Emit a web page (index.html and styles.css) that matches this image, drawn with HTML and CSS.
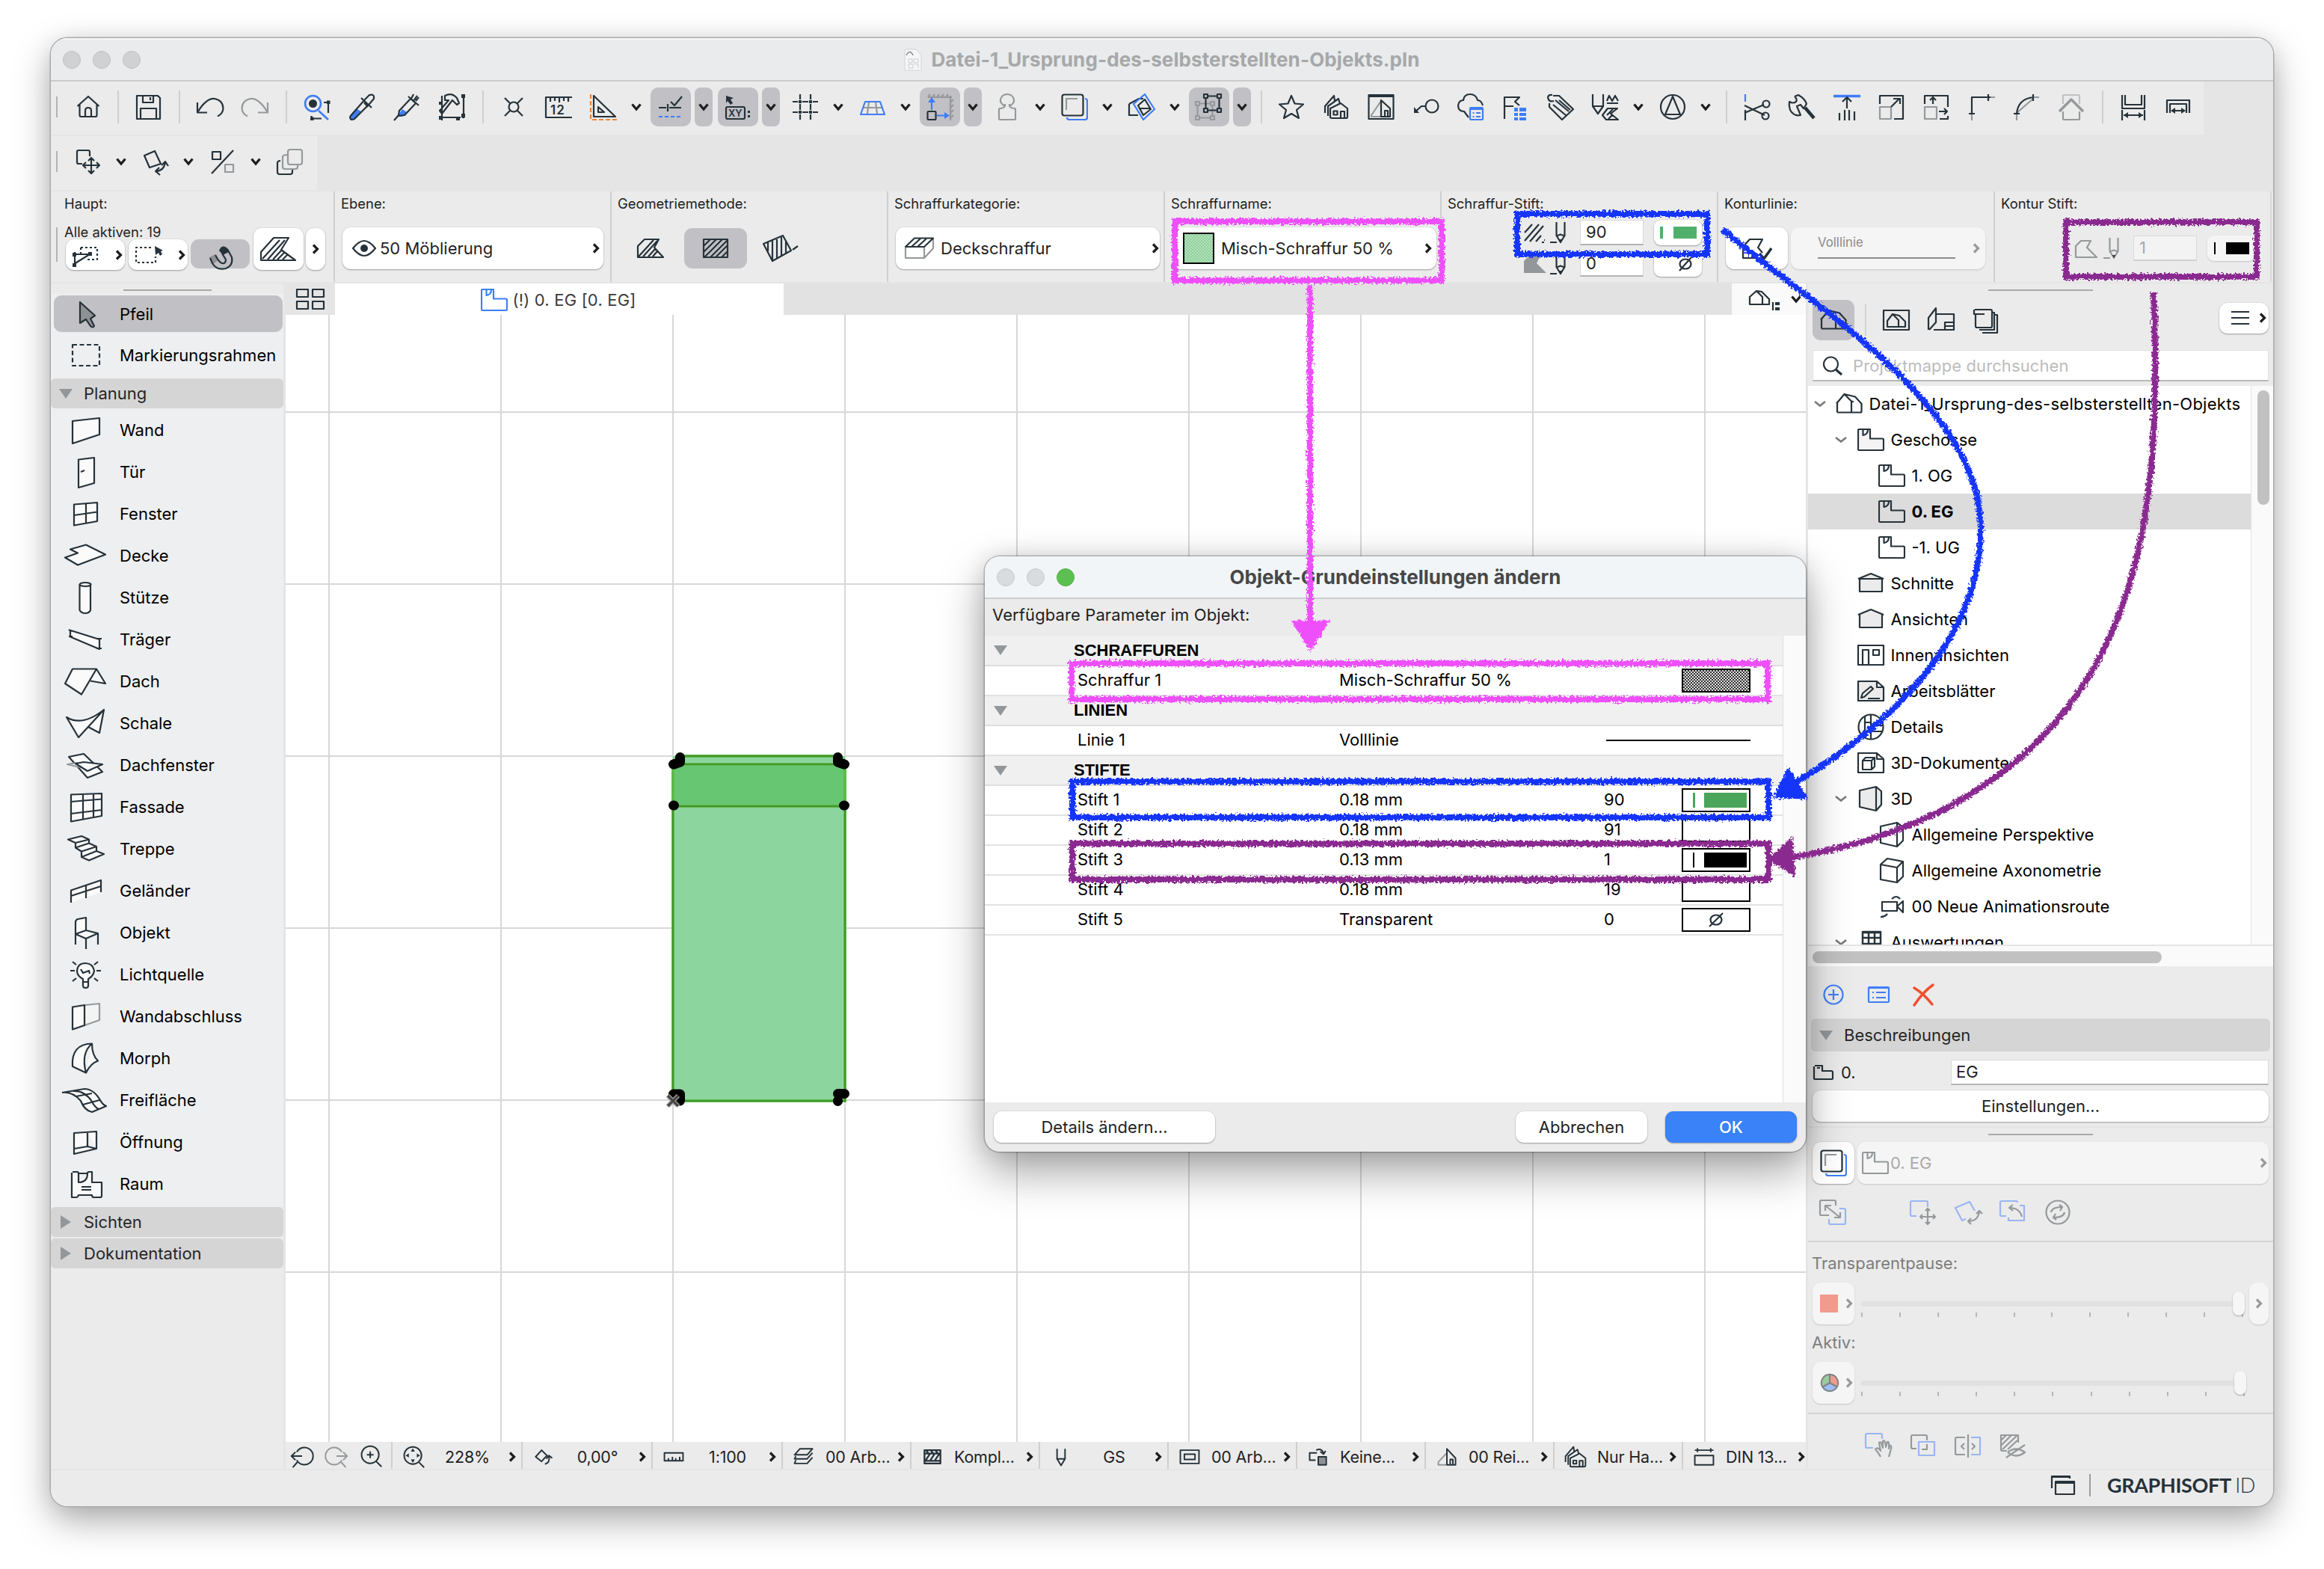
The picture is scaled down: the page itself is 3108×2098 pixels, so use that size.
FILE: index.html
```html
<!DOCTYPE html>
<html lang="de">
<head>
<meta charset="utf-8">
<title>Datei-1_Ursprung-des-selbsterstellten-Objekts.pln</title>
<link rel="stylesheet" href="styles.css">
</head>
<body>
<svg class="sprite" aria-hidden="true">
  <symbol id="cd" viewBox="0 0 16 16"><path d="M2.5 4.5l5.500 6.500 5.500-6.500"/></symbol>
  <symbol id="cr" viewBox="0 0 16 16"><path d="M5 2.500l5.500 5.500-5.500 5.500"/></symbol>
  <symbol id="tc" viewBox="0 0 20 20"><path d="M3 7l7 5.500 7-5.500"/></symbol>
  <symbol id="storey" viewBox="0 0 36 36"><path d="M3 4H17V16.500H33.500Q35 16.500 35 18V30.500Q35 32 33.500 32H2.500Q1 32 1 30.500V5Q1 4 3 4M7.500 4V12Q14 11 14 4"/></symbol>
  <symbol id="house" viewBox="0 0 36 36"><path d="M2 29.500V16.500L11.500 5 21 14.500V29.500H2M1 17.500L3 15M11.500 5L26 8.500 35.500 19M21 14.500L24 15.500M34.500 18V28Q34.500 29.500 33 29.500H21"/></symbol>
  <symbol id="pen" viewBox="0 0 24 30"><path d="M8.500 1V19L14 28 19.500 19V1M8.500 19.500L14 17.500 19.500 19.500M0 28H9"/><path class="f" d="M12 24h4l-2 4z"/></symbol>
  <symbol id="trace" viewBox="0 0 36 36"><path class="b" d="M32 7Q35 7 35 10V32Q35 35 32 35H11Q8 35 8 32"/><rect x="1.500" y="1.500" width="28" height="28" rx="3"/><path class="g" d="M7 22V7H22"/></symbol>
  <symbol id="reno" viewBox="0 0 36 36"><path d="M3 26V17L15 3 16 10 M7 30V17L21 7 23 14M10 33V20L24 13 33 20V31Q33 33 31 33H12Q10 33 10 31M24 33V24H29V33"/><rect x="14.500" y="23.500" width="5" height="5"/></symbol>
</svg>

<div class="window">
  <header class="titlebar">
    <div class="lights"><i></i><i></i><i></i></div>
    <div class="doctitle"><svg class="doc" viewBox="0 0 24 30"><path d="M1 1H16L23 9V29H1Z" fill="#f6f6f6" stroke="#d4d4d4"/><path d="M3 9Q8 0 12 9" fill="none" stroke="#888" stroke-width="1.500"/><path d="M6 14h5v5h-5zM13 14h6v5h-6zM6 21h6v5h-6zM14 21h5v5" fill="none" stroke="#ccc"/></svg>Datei-1_Ursprung-des-selbsterstellten-Objekts.pln</div>
  </header>

  <nav class="bar bar1">
    <div class="barfill">
      <i class="grip"></i>
      <span class="t"><svg class="i" viewBox="0 0 36 36"><path d="M3.500 17L18 4 32.500 17M6.500 15V29Q6.500 31 8.500 31H27.500Q29.500 31 29.500 29V15M14 31V23Q14 19 18 19T22 23V31"/></svg></span>
      <i class="sep s20"></i>
      <span class="t"><svg class="i" viewBox="0 0 36 36"><path d="M3 3H31L34 6V34H3Z M11 3V12H25V3M21 5V9M8 34V20H29V34"/></svg></span>
      <i class="sep"></i>
      <span class="t"><svg class="i" viewBox="0 0 36 36"><path d="M1 12V25.500H14M2 24Q13 6 24 7 35 9 35.500 20 35 27 28 30.500"/></svg></span>
      <span class="t"><svg class="i gray" viewBox="0 0 36 36"><path d="M35 12V25.500H22M34 24Q23 6 12 7 1 9 .500 20 1 27 8 30.500"/></svg></span>
      <i class="sep"></i>
      <span class="t"><svg class="i" viewBox="0 0 36 36"><path class="b" stroke-width="2.600" d="M20 23L33 35"/><ellipse class="b" stroke-width="2.600" cx="12.500" cy="13.500" rx="10.500" ry="10.500"/><circle class="f" cx="12.500" cy="13.500" r="5.500"/><path d="M33 12V26M27 12H35M12 33.500H24M10.500 30V36"/><path class="f" d="M31 9.500h4.500v4.500h-4.500zM9 31.500h4.500v4.500h-4.500z"/></svg></span>
      <span class="t"><svg class="i" viewBox="0 0 36 36"><path class="bf" d="M2 30L10 20 17 24 8 34Q3 37 2 30"/><path d="M2 31L22 8 28 2Q35 0 34 7L28 14 8 34Q2 37 2 31M17 6L31 19M21 12L26 18"/></svg></span>
      <span class="t"><svg class="i" viewBox="0 0 36 36"><path class="bf" d="M8 27L12 21 18 25 12 31H7"/><path d="M1 36L7 29 8 23 23 7 30 13 15 29 7 30M20 4L34 16M27 1L24 7M30 10L34 5M27 10L32 3"/></svg></span>
      <span class="t"><svg class="i" viewBox="0 0 36 36"><path d="M9 3Q18-2 25 6L28 13 25 15 19 9 5 27 2 23 14 9 9 9ZM5 3V33M34 3V33M3 32H30M33 28V33M5 28V36"/><path class="f" d="M1 30h5v5h-5zM31 27h5v5h-5zM1 11h4v4h-4zM31 1h5v5h-5zM24 31h5v5h-5z"/></svg></span>
      <i class="sep s23"></i>
      <span class="t"><svg class="i" viewBox="0 0 36 36"><circle cx="18" cy="18" r="6.500"/><path d="M6 6L13.500 13.500M30 6L22.500 13.500M6 30L13.500 22.500M30 30L22.500 22.500"/></svg></span>
      <span class="t"><svg class="i" viewBox="0 0 36 36"><path d="M36 5H1V32H36M7 5V11M13 5V10M19 5V12M25 5V10M31 5V11"/><text x="7" y="28" class="num">12</text></svg></span>
      <span class="t"><svg class="i" viewBox="0 0 36 36"><path class="o" stroke-dasharray="6 3" d="M1 1V35H36"/><path d="M5 3V31H34ZM11 18V25H19Z"/></svg></span><span class="c"><svg class="k"><use href="#cd"/></svg></span>
      <span class="t on"><svg class="i" viewBox="0 0 36 36"><path d="M2 19H12M16 19H32M14 14V24M18 11L23 16 33 4"/><path class="b" stroke-dasharray="5 3" d="M2 31H32"/></svg></span><span class="c on"><svg class="k"><use href="#cd"/></svg></span>
      <span class="t on"><svg class="i" viewBox="0 0 36 36"><path class="f" d="M2 3L12 6 8 8 11 13 8 15 4 10 2 13Z"/><rect x="2" y="18" width="25" height="16" rx="2"/><text x="5" y="31" class="xy">XY</text><path class="f" d="M31 23h3v3h-3zM31 29h3v3h-3z"/></svg></span><span class="c on"><svg class="k"><use href="#cd"/></svg></span>
      <span class="t"><svg class="i" viewBox="0 0 36 36"><path d="M11 1V8M11 14V22M11 28V35M25 1V8M25 14V22M25 28V35M1 11H8M14 11H22M28 11H35M1 25H8M14 25H22M28 25H35"/><path class="f" d="M9 9h4v4h-4zM23 9h4v4h-4zM9 23h4v4h-4zM23 23h4v4h-4z"/></svg></span><span class="c"><svg class="k"><use href="#cd"/></svg></span>
      <span class="t"><svg class="i" viewBox="0 0 36 36"><path class="g" d="M13 11L11 27M22 11L24 27M5 19H31"/><path class="b" d="M8 11H28L34 28H2Z"/></svg></span><span class="c"><svg class="k"><use href="#cd"/></svg></span>
      <span class="t on"><svg class="i" viewBox="0 0 36 36"><path class="g" d="M2 5H34M32 3V36M2 5l3-4M8 5l3-4M14 5l3-4M20 5l3-4M26 5l3-4M32 12l4-4M32 19l4-4M32 26l4-4M32 33l4-4"/><rect x="1.500" y="24" width="11" height="11" rx="1"/><path class="b" d="M7 22V10M14 29.500H25"/><path class="bf" d="M2 12L7 5 12 12ZM24 25L31 29.500 24 34Z"/></svg></span><span class="c on"><svg class="k"><use href="#cd"/></svg></span>
      <span class="t"><svg class="i gray" viewBox="0 0 36 36"><path d="M15 17Q8 13 9 8 11 1 18 1 25 1 27 8 28 13 21 17M15 14V17Q13 20 8 20 7 20 7 22V34Q7 35 8 35H28Q29 35 29 34V22Q29 20 28 20 23 20 21 17V14"/></svg></span><span class="c"><svg class="k"><use href="#cd"/></svg></span>
      <span class="t"><svg class="i"><use href="#trace"/></svg></span><span class="c"><svg class="k"><use href="#cd"/></svg></span>
      <span class="t"><svg class="i" viewBox="0 0 36 36"><path d="M1 14L14 7H20M1 14V29H13"/><path class="b" d="M22 1L35 21 20 35 7 14Z"/><path d="M22 8L30 21 20 29 13 16ZM14 20H29"/></svg></span><span class="c"><svg class="k"><use href="#cd"/></svg></span>
      <span class="t on"><svg class="i" viewBox="0 0 36 36"><path class="g" d="M0 11h5v5h-5zM0 30h5v5h-5zM20 30h5v5h-5zM20 11h5v5h-5zM2.500 16V30M5 32.500H20M5 13.500H20M22.500 16V30"/><path d="M11 1h5v5h-5zM29 1h5v5h-5zM11 20h5v5h-5zM29 20h5v5h-5zM16 3.500H29M16 22.500H29M13.500 6V20M31.500 6V20"/></svg></span><span class="c on"><svg class="k"><use href="#cd"/></svg></span>
      <i class="sep s20"></i>
      <span class="t"><svg class="i" viewBox="0 0 36 36"><path d="M18 3L22.500 13.500 34 14.500 25 22 28 33 18 27 8 33 11 22 2 14.500 13.500 13.500Z"/></svg></span>
      <span class="t"><svg class="i"><use href="#reno"/></svg></span>
      <span class="t"><svg class="i" viewBox="0 0 36 36"><path d="M1.500 2H34.500V34H1.500ZM1.500 4H34.500"/><path class="g" d="M5 31V29L18 10V31Z"/><path d="M18 9V31H30V20ZM23 31V23H27V31"/></svg></span>
      <span class="t"><svg class="i" viewBox="0 0 36 36"><circle cx="26" cy="17" r="8.500"/><path d="M18 17H12L4 24"/><path class="f" d="M2 26V18L9 26Z"/></svg></span>
      <span class="t"><svg class="i" viewBox="0 0 36 36"><path d="M15 32Q12 28 9 24 1 24 1 16 2 9 8 9 9 1 17 1 25 1 27 9 32 9 34 16"/><rect class="b" x="17" y="19" width="17" height="16" rx="1"/><path class="b" d="M17 21H34M20.500 26h2M25 26h6M20.500 31h2M25 31h6"/></svg></span>
      <span class="t"><svg class="i" viewBox="0 0 36 36"><path d="M3 34V5H23L17 11 23 16M3 17H15"/><path class="bf" d="M16 19h5v5h-5zM23 19h9v5h-9zM16 26h5v4h-5zM23 26h9v4h-9zM16 32h5v4h-5zM23 32h9v4h-9z"/></svg></span>
      <span class="t"><svg class="i" viewBox="0 0 36 36"><path d="M9 10Q2 12 1 5 2 1 7 2M8 3H16L35 21 20 35 3 18V13M11 9L29 24M8 15L25 29M16 9L31 22"/></svg></span>
      <span class="t"><svg class="i" viewBox="0 0 36 36"><path d="M1 1V17L8 27 15 17V1M1 17H15M20 10l3-7 4 7 4-7 4 7M20 13h15M19 35L14 29 21 20H34L25 27 35 35ZM20 29l8-8M22 34l6-6"/></svg></span><span class="c"><svg class="k"><use href="#cd"/></svg></span>
      <span class="t"><svg class="i" viewBox="0 0 36 36"><circle cx="18" cy="18" r="16"/><path d="M18 4L28 28H8Z"/></svg></span><span class="c"><svg class="k"><use href="#cd"/></svg></span>
      <i class="sep s23"></i>
      <span class="t"><svg class="i" viewBox="0 0 36 36"><path class="b" d="M2 1V11"/><path d="M2 22V36M1 16L28 29M1 26L27 15"/><circle cx="30" cy="14" r="4.500"/><circle cx="29" cy="30" r="4.500"/></svg></span>
      <span class="t"><svg class="i" viewBox="0 0 36 36"><path d="M8 4L13 2Q22 7 24 14L20 20 16 15 11 17 16 29Q7 31 2 22 0 16 1 11 6 14 10 11 12 8 8 4"/><path stroke-width="4.500" d="M22 19L34 33"/></svg></span>
      <span class="t"><svg class="i" viewBox="0 0 36 36"><path class="b" stroke-width="3.500" d="M0 3.500H36"/><path d="M18 20V6M12 11L18 5 24 11M8 36V26M15 36V22M21 36V22M28 36V24"/></svg></span>
      <span class="t"><svg class="i" viewBox="0 0 36 36"><path class="g" d="M2 18H17V34H2Z"/><path d="M2 14V3H33V34H21M17 18L28 7M20 7H29V14"/></svg></span>
      <span class="t"><svg class="i" viewBox="0 0 36 36"><path class="g" d="M2 18H18V34H2Z"/><path d="M2 14V3H33V18M33 30V34H22M13 14V6M9 9l4-4 4 4M21 24H31M28 20l4 4-4 4"/></svg></span>
      <span class="t"><svg class="i" viewBox="0 0 36 36"><path class="g" d="M5 28V36M30 5H36"/><path d="M5 28V5H30M1 27H9M27 1V10"/></svg></span>
      <span class="t"><svg class="i" viewBox="0 0 36 36"><path class="g" d="M5 28V36M5 26L27 7M28 5H35"/><path d="M5 28Q6 7 28 5M1 27H9M27 1V10"/></svg></span>
      <span class="t"><svg class="i gray" viewBox="0 0 36 36"><path d="M7 24V34Q7 35 9 35H27Q29 35 29 34V24"/><path opacity=".5" d="M7 14V3Q7 2 9 2H27Q29 2 29 3V14"/><path stroke-width="3.500" d="M2 24L18 8 34 24"/></svg></span>
      <i class="sep"></i>
      <span class="t"><svg class="i" viewBox="0 0 36 36"><path d="M3 2V20H33V2M7 2V15H29V2M3 22V36M33 22V36M5 29H31"/><path class="f" d="M5 29l6-4v8zM31 29l-6-4v8z"/></svg></span>
      <span class="t"><svg class="i" viewBox="0 0 36 36"><path d="M3 26V9H33V26M7 26V14H29V26M9 23H27"/><path class="f" d="M8 23l6-4v8zM28 23l-6-4v8z"/></svg></span>
    </div>
  </nav>

  <nav class="bar bar2">
    <div class="barfill">
      <i class="grip"></i>
      <span class="t"><svg class="i" viewBox="0 0 36 36"><path d="M10 21H5Q3 21 3 19V5Q3 3 5 3H18Q20 3 20 5V11M22 13V34M11 23H33M18 17l4-4 4 4M18 30l4 4 4-4M15 19l-4 4 4 4M29 19l4 4-4 4"/></svg></span><span class="c"><svg class="k"><use href="#cd"/></svg></span>
      <span class="t"><svg class="i" viewBox="0 0 36 36"><path d="M17 4L3 10 10 26 25 21ZM18 31Q29 31 31 19M26 23L31 18 35 24M23 26L18 31 24 36"/></svg></span><span class="c"><svg class="k"><use href="#cd"/></svg></span>
      <span class="t"><svg class="i" viewBox="0 0 36 36"><path d="M4 5H15V15H4ZM3 34L32 3"/><path class="g" d="M21 22H32V32H21Z"/></svg></span><span class="c"><svg class="k"><use href="#cd"/></svg></span>
      <span class="t"><svg class="i" viewBox="0 0 36 36"><path d="M21 32Q21 35 18 35H4Q1 35 1 32V20Q1 17 5 17M21 28V32"/><path class="g" d="M14 9Q8 9 8 12V25Q8 28 11 28H25Q28 28 28 25V23"/><rect class="g" x="15" y="2" width="19" height="20" rx="3"/></svg></span>
    </div>
  </nav>

  <section class="info">
    <div class="cell first">
      <label>Haupt:</label>
      <div class="row">
        <i class="grip"></i>
        <div class="haupt">
          <span class="small">Alle aktiven: 19</span>
          <div class="hb">
            <span class="btn w79"><svg class="i" viewBox="0 0 36 36"><path stroke-dasharray="3 3" d="M12 8H34V24H18M12 8V16"/><path d="M3 30L24 17M5 17H24M4 14V34"/><path class="f" d="M1 15h5v5h-5zM22 14h5v5h-5zM1 29h5v5h-5z"/></svg><svg class="k"><use href="#cr"/></svg></span>
            <span class="btn w79"><svg class="i" viewBox="0 0 36 36"><path stroke-dasharray="3 3" d="M22 8H2V28H28V20"/><path class="f" d="M27 6L38 12 35 13 37 17 34 19 32 15 28 18Z"/></svg><svg class="k"><use href="#cr"/></svg></span>
            <span class="btn w79 down"><svg class="i" viewBox="0 0 36 36"><path fill="#8e9295" stroke="none" d="M3 20L11 16 15 24 8 29Z"/><path d="M27 9L33 20Q35 31 25 35 13 38 7 28L4 21M20 15L25 23Q25 29 20 28 16 27 11 17"/><path class="f" d="M16 11Q20 2 27 8L29 13 21 17Z"/></svg></span>
            <span class="btn big w67"><svg class="i w48" viewBox="0 0 48 32"><path d="M1 31V20L18 1H38L28 17 47 31ZM3 29L26 4M10 30L33 4M17 30L29 17M23 30L32 21M30 30L36 24"/></svg></span>
            <span class="btn big w26"><svg class="k"><use href="#cr"/></svg></span>
          </div>
        </div>
      </div>
    </div>
    <div class="cell">
      <label>Ebene:</label>
      <div class="row"><span class="btn pop big"><svg class="i eye" viewBox="0 0 34 24"><path d="M2 12Q10 2 17 2T32 12Q24 22 17 22T2 12Z"/><circle class="f" cx="17" cy="12" r="5"/></svg>50 Möblierung<svg class="k"><use href="#cr"/></svg></span></div>
    </div>
    <div class="cell">
      <label>Geometriemethode:</label>
      <div class="row geo">
        <span class="g1"><svg class="i" viewBox="0 0 36 36"><path d="M1 30V15L10 6H29L23 17 35 30ZM2 29L22 7M8 29L27 8M15 29L24 19M21 29L27 22"/></svg></span>
        <span class="g1 sel"><svg class="i" viewBox="0 0 36 36"><path d="M2 6H34V30H2ZM2 15L11 6M2 23L19 6M3 30L27 6M11 30L34 7M18 30L34 14M26 30L34 22"/></svg></span>
        <span class="g1"><svg class="i w48" viewBox="0 0 48 36"><path d="M1 12L27 1 38 21 13 35ZM7 10V22M13 8V34M19 6V31M25 3V28M31 9V24M40 20L47 15"/></svg></span>
      </div>
    </div>
    <div class="cell">
      <label>Schraffurkategorie:</label>
      <div class="row"><span class="btn pop big kat"><svg class="i w40" viewBox="0 0 40 30"><path class="g" d="M1 14V28H26L38 15V2M26 14V28"/><path d="M1 13L13 1.500H38L26 13ZM9 13L21 2M17 13L29 2"/></svg>Deckschraffur<svg class="k"><use href="#cr"/></svg></span></div>
    </div>
    <div class="cell">
      <label>Schraffurname:</label>
      <div class="row"><span class="btn pop big nam"><i class="swatch"></i>Misch-Schraffur 50 %<svg class="k"><use href="#cr"/></svg></span></div>
    </div>
    <div class="cell">
      <label>Schraffur-Stift:</label>
      <div class="row stift">
        <div class="pr"><svg class="i w28" viewBox="0 0 28 28"><path d="M1 14L11 3M1 25L20 3M8 26L26 5M16 26L23 18M24 27h3M27 24h1"/></svg><svg class="i penic"><use href="#pen"/></svg><span class="field">90</span><span class="btn pb"><i class="ln green"></i><i class="bx green"></i></span></div>
        <div class="pr"><svg class="i w28" viewBox="0 0 28 28"><path d="M0 26V10L7 3H22L17 13 30 26Z" fill="#939799" stroke="none"/></svg><svg class="i penic"><use href="#pen"/></svg><span class="field">0</span><span class="btn pb"><svg class="i nul" viewBox="0 0 20 20"><ellipse cx="10" cy="10" rx="7.500" ry="6.500"/><path d="M2 19L18 1"/></svg></span></div>
      </div>
    </div>
    <div class="cell">
      <label>Konturlinie:</label>
      <div class="row kl">
        <span class="btn big w83"><svg class="i w44" viewBox="0 0 44 34"><path d="M22 30H3V15L12 5H29L23 16 29 23"/><path stroke-width="3.500" d="M25 24L31 31 41 17"/></svg></span>
        <span class="btn big dim volll"><span class="vl">Volllinie<i></i></span><svg class="k"><use href="#cr"/></svg></span>
      </div>
    </div>
    <div class="cell last">
      <label>Kontur Stift:</label>
      <div class="row stift ks">
        <div class="pr"><svg class="i w32 gray" viewBox="0 0 32 28"><path d="M2 26V11L9 4H22L17 13 30 26Z"/></svg><svg class="i penic gray"><use href="#pen"/></svg><span class="field dim">1</span><span class="btn pb dim"><i class="ln"></i><i class="bx"></i></span></div>
      </div>
    </div>
  </section>

  <main class="main">
    <aside class="tools">
      <div class="strip"><i></i></div>
      <div class="toollist">
        <div class="tool cur"><svg class="i" viewBox="0 0 60 44"><path fill="#8e9295" d="M22 6V34L30 29 36 38Q39 41 41 38L36 28 42 24Z"/></svg>Pfeil</div>
        <div class="tool mark"><svg class="i" viewBox="0 0 60 44"><path stroke-dasharray="6 3.500" d="M12 8H48V36H12Z"/></svg>Markierungsrahmen</div>
        <div class="grp open">Planung</div>
        <div class="tool"><svg class="i w" viewBox="0 0 60 44"><path d="M12 10L48 6V28L12 40Z"/></svg>Wand</div>
        <div class="tool"><svg class="i w" viewBox="0 0 60 44"><path d="M20 5.500L41 3V37L20 43ZM23 22l5-2"/></svg>Tür</div>
        <div class="tool"><svg class="i w" viewBox="0 0 60 44"><path d="M14 9.500L45 7V32L14 37.500ZM30 8V35M14 24L45 19.500"/></svg>Fenster</div>
        <div class="tool"><svg class="i w" viewBox="0 0 60 44"><path d="M30 7.500L56 20.500 19 34.500 2 24.500 19 18.500 9 13.500Z"/></svg>Decke</div>
        <div class="tool"><svg class="i w" viewBox="0 0 60 44"><path d="M21.500 5V39Q24 43 29 43T36 39V5"/><ellipse cx="29" cy="4.500" rx="7.500" ry="2.500"/></svg>Stütze</div>
        <div class="tool"><svg class="i w" viewBox="0 0 60 44"><path d="M8 9.500L48 22V35L9 18.500V10M7 9L11 11M45 21H51M44 34H51M7 18h5"/></svg>Träger</div>
        <div class="tool"><svg class="i w" viewBox="0 0 60 44"><path d="M44 5.500L56 25 36 21.500"/><path d="M12 5.500H44L24 39.500 2 25Z"/></svg>Dach</div>
        <div class="tool"><svg class="i w" viewBox="0 0 60 44"><path d="M54 4L48 35 33 27"/><path d="M4 14Q25 27 54 4L20 41Z"/></svg>Schale</div>
        <div class="tool"><svg class="i w" viewBox="0 0 60 44"><path d="M7 11L27 7 52 31 32 39Z"/><path class="g" d="M5 21L18 19 22 25Z"/><path d="M16 20L27 18 52 21 32 30Z"/></svg>Dachfenster</div>
        <div class="tool"><svg class="i w" viewBox="0 0 60 44"><path d="M10 5.500L51 4V34L10 41.500ZM26 5V38M40 4.500V36M10 15L51 11.500M10 31L51 26"/></svg>Fassade</div>
        <div class="tool"><svg class="i w" viewBox="0 0 60 44"><path d="M6 9.500L24 5 34 9.500V14.500L44 19V25L54 29 34 37.500 24 33V25.500L16 20.500V14ZM16 14L34 9.500M16 20.500L34 14.500M24 25.500L44 19M24 33L44 25"/></svg>Treppe</div>
        <div class="tool"><svg class="i w" viewBox="0 0 60 44"><path d="M10 38V21.500L50 8V24M10 29L50 16M30 14.500V32"/></svg>Geländer</div>
        <div class="tool"><svg class="i w" viewBox="0 0 60 44"><path d="M16 38V8Q16 5 19 4L30 2V19L46 23 30 30 16 24 30 19M30 30V44M46 23V38"/></svg>Objekt</div>
        <div class="tool"><svg class="i w" viewBox="0 0 60 44"><path d="M26 32V28Q18 24 18 17 19 7 29 7T41 17Q40 24 33 28V32ZM26 32V37Q26 40 29.500 40T33 37V32M23 15l3 5 8-3 1 4M12 5l5 4M46 5l-5 4M9 17h6M44 17h6M12 31l5-4M46 31l-5-4"/></svg>Lichtquelle</div>
        <div class="tool"><svg class="i w" viewBox="0 0 60 44"><path class="g" d="M28 7L48 5V27L28 34Z"/><path d="M12 9.500L28 7V34L12 39.500Z"/></svg>Wandabschluss</div>
        <div class="tool"><svg class="i w" viewBox="0 0 60 44"><path d="M12 33Q10 3 38 2.500 38 18 46 25.500 36 29 30 41.500ZM38 2.500Q23 15 30 41.500"/></svg>Morph</div>
        <div class="tool"><svg class="i w" viewBox="0 0 60 44"><path d="M-2 12L28 7Q40 7 49 22 52 28 57 30L38 38Q28 36 23 23 12 10-2 12M13 10Q28 9 38 24 42 32 47 34M17 17L38 13M26 28L48 22"/></svg>Freifläche</div>
        <div class="tool"><svg class="i w" viewBox="0 0 60 44"><path d="M14 10L44 8V31L14 38ZM32 9V28L44 31M32 28L14 31"/></svg>Öffnung</div>
        <div class="tool"><svg class="i w" viewBox="0 0 60 44"><path d="M12 6H18Q20 6 20 8H32Q32 6 34 6H38V20H51V38Q51 40 49 40H40Q38 40 38 37H20Q19 40 17 40H11V7M20 8V20Q32 20 32 8M24 26H37M24 30H37"/></svg>Raum</div>
      </div>
      <div class="grp">Sichten</div>
      <div class="grp">Dokumentation</div>
    </aside>

    <section class="view">
      <div class="tabs">
        <span class="quad"><svg class="i" viewBox="0 0 40 30"><path d="M2 2H17V12H2ZM23 2H38V12H23ZM2 18H17V28H2ZM23 18H38V28H23Z"/></svg></span>
        <span class="tab"><svg class="i blue"><use href="#storey"/></svg>(!) 0. EG [0. EG]</span>
        <span class="nav"><svg class="i w44" viewBox="0 0 44 32"><path d="M2 23V13L11 5 19 13V23ZM11 5L18 6 28 16V23H19M33 20V31"/><path class="f" d="M36 20h6v4h-6zM36 27h6v4h-6z"/></svg><svg class="k"><use href="#cd"/></svg></span>
      </div>
      <div class="canvas">
        <svg class="drawing" viewBox="882 990 270 504">
          <path d="M900 1011H1130V1472H900Z" fill="#8dd59f"/>
          <path d="M900 1022H1130V1078H900Z" fill="#66c672"/>
          <g fill="none"><path stroke="#5dba4a" stroke-width="4" d="M900 1018V1472H1130V1018L1123 1011H907ZM900 1022H1130M900 1078H1130"/><path stroke="#3c8a24" stroke-width="1.500" d="M900 1078V1472H1130V1078M907 1011H1123M900 1022H1130M900 1078H1130"/></g>
          <path fill="none" stroke="#000" stroke-width="13" stroke-linecap="round" stroke-linejoin="round" d="M900.500 1022h.5L909.500 1019V1012.500M1129.500 1022h-.5L1120.500 1019V1012.500M900.500 1077h1M1128.500 1077h1M900.500 1463H909.500V1472M1129.500 1462.500H1120.500M1120.500 1472V1472.500"/>
          <path d="M893 1465L907 1479M907 1465L893 1479" stroke="#999" stroke-width="6"/><path d="M893 1465L907 1479M907 1465L893 1479" stroke="#444" stroke-width="3"/>
        </svg>
      </div>
      <div class="status">
        <div class="sc zoomers">
          <svg class="i" viewBox="0 0 36 36"><path d="M10 12A13 13 0 1 1 10 24M2 18H18M8 12l-6 6 6 6M11 27L4 35"/></svg>
          <svg class="i gray" viewBox="0 0 36 36"><path d="M26 12A13 13 0 1 0 26 24M34 18H18M28 12l6 6-6 6M25 27L32 35"/></svg>
          <svg class="i" viewBox="0 0 36 36"><circle cx="17" cy="16" r="13"/><path d="M12 16H22M17 11V21M26 26L34 34"/></svg>
        </div>
        <div class="sc a"><svg class="i" viewBox="0 0 36 36"><circle cx="17" cy="16" r="13"/><path class="f" d="M17 5l3 5h-6zM17 27l3-5h-6zM6 16l5-3v6zM28 16l-5-3v6z"/><path d="M26 26L34 34"/></svg><b>228%</b><svg class="k"><use href="#cr"/></svg></div>
        <div class="sc a"><svg class="i" viewBox="0 0 36 36"><path d="M15 8L6 18 15 25 23 16ZM20 29Q28 27 26 17M22 21l4-5 5 4"/></svg><b>0,00°</b><svg class="k"><use href="#cr"/></svg></div>
        <div class="sc a"><svg class="i" viewBox="0 0 36 36"><path d="M4 12H32V24H4ZM10 24V20M16 24V18M21 24V20M27 24V18"/></svg><b>1:100</b><svg class="k"><use href="#cr"/></svg></div>
        <div class="sc"><svg class="i" viewBox="0 0 36 36"><path d="M12 6H31L23 15H4ZM6 17L4 21H23L31 12M6 23L4 28H23L31 19"/></svg><b>00 Arb...</b><svg class="k"><use href="#cr"/></svg></div>
        <div class="sc"><svg class="i" viewBox="0 0 36 36"><path d="M6 8H30V28H6ZM6 13H30M6 24H30M8 23l6-9M15 23l6-9M22 23l6-9M9 9l3 4M16 9l3 4M23 9l3 4" stroke-width="2.600"/></svg><b>Kompl...</b><svg class="k"><use href="#cr"/></svg></div>
        <div class="sc a"><svg class="i" viewBox="0 0 36 36"><path d="M12 6V21L18 31 24 21V6M12 21H24"/></svg><b>GS</b><svg class="k"><use href="#cr"/></svg></div>
        <div class="sc"><svg class="i" viewBox="0 0 36 36"><path d="M4 8H32V28H4ZM10 14H26V22H10Z"/></svg><b>00 Arb...</b><svg class="k"><use href="#cr"/></svg></div>
        <div class="sc"><svg class="i" viewBox="0 0 36 36"><path d="M14 23H5V12H16M15 8Q22 4 26 12M21 10l5 4 3-5"/><path fill="#8e9295" d="M18 18H30V30H18Z"/></svg><b>Keine...</b><svg class="k"><use href="#cr"/></svg></div>
        <div class="sc"><svg class="i" viewBox="0 0 36 36"><path class="g" d="M17 13L5 26V30H17"/><path d="M18 6V30H31V20ZM23 30V22H27V30"/></svg><b>00 Rei...</b><svg class="k"><use href="#cr"/></svg></div>
        <div class="sc"><svg class="i"><use href="#reno"/></svg><b>Nur Ha...</b><svg class="k"><use href="#cr"/></svg></div>
        <div class="sc end"><svg class="i" viewBox="0 0 36 36"><path d="M4 16H32V30H4ZM4 8H32M8 5V11M28 5V11"/></svg><b>DIN 13...</b><svg class="k"><use href="#cr"/></svg></div>
      </div>
    </section>

    <aside class="side">
      <div class="strip"><i></i></div>
      <div class="stabs">
        <span class="st on"><svg class="i"><use href="#house"/></svg></span><i class="vs"></i>
        <span class="st2"><svg class="i" viewBox="0 0 36 36"><path d="M1 5H35V31H1ZM6 27V19L13 10 21 18V27ZM13 10L22 12 30 20V27H21"/></svg></span>
        <span class="st2"><svg class="i" viewBox="0 0 36 36"><path d="M1 31V15L11 2V21L2 31M11 10H35V31H8M23 31V21H35M23 26H35"/></svg></span>
        <span class="st2"><svg class="i" viewBox="0 0 36 36"><path d="M3 4H24Q26 4 26 6V26Q26 28 24 28H6Q4 28 4 26V10M2 4V10H16M26 8H29V31H9M30 11H33V35H13"/></svg></span>
        <span class="btn menu"><svg class="i w28" viewBox="0 0 28 24"><path d="M2 4H26M2 12H26M2 20H26"/></svg><svg class="k"><use href="#cr"/></svg></span>
      </div>
      <div class="search"><svg class="i" viewBox="0 0 28 28"><circle cx="11.500" cy="12" r="9.500"/><path d="M18 19L26 26" stroke-width="3"/></svg>Projektmappe durchsuchen</div>
      <div class="treebox">
        <div class="tree">
          <div class="n l0"><svg class="tw"><use href="#tc"/></svg><svg class="i"><use href="#house"/></svg>Datei-1_Ursprung-des-selbsterstellten-Objekts</div>
          <div class="n l1"><svg class="tw"><use href="#tc"/></svg><svg class="i w"><use href="#storey"/></svg>Geschosse</div>
          <div class="n l2"><svg class="i"><use href="#storey"/></svg>1. OG</div>
          <div class="n l2 hit"><svg class="i"><use href="#storey"/></svg>0. EG</div>
          <div class="n l2"><svg class="i"><use href="#storey"/></svg>-1. UG</div>
          <div class="n l1 x"><svg class="i e" viewBox="0 0 36 36"><path d="M3 12V29H33V12M1 12L18 5 35 12M3 12H33"/></svg>Schnitte</div>
          <div class="n l1 x"><svg class="i e" viewBox="0 0 36 36"><path d="M3 12V29H33V12M1 12L18 5 35 12"/></svg>Ansichten</div>
          <div class="n l1 x"><svg class="i" viewBox="0 0 36 36"><path d="M1 5H35V31H1ZM7 31V11H15V31M21 11H29V18H21Z"/></svg>Innenansichten</div>
          <div class="n l1 x"><svg class="i e" viewBox="0 0 36 36"><path d="M1 5H26L35 13V31H1ZM26 5V13H35M5 27L7 21 18 12 21 15 9 26ZM14 28H30"/></svg>Arbeitsblätter</div>
          <div class="n l1 x"><svg class="i" viewBox="0 0 36 36"><circle cx="18" cy="18" r="16.500"/><path d="M10 4V24H34M18 2V34M18 16H34M10 12H18"/></svg>Details</div>
          <div class="n l1 x"><svg class="i" viewBox="0 0 36 36"><path d="M1 5H26L35 13V31H1ZM26 5V13H35M7 15H19V27H7ZM7 15L11 11H23L19 15M23 11V23L19 27"/></svg>3D-Dokumente</div>
          <div class="n l1"><svg class="tw"><use href="#tc"/></svg><svg class="i e" viewBox="0 0 36 36"><path d="M3 7L25 2V34L3 29ZM25 2L32 8V26L25 34"/></svg>3D</div>
          <div class="n l2"><svg class="i" viewBox="0 0 36 36"><path d="M3 7L25 2V34L3 29ZM25 2L33 8V26L25 34"/></svg>Allgemeine Perspektive</div>
          <div class="n l2"><svg class="i" viewBox="0 0 36 36"><path d="M3 10L12 2 33 6V26L25 34 3 30ZM3 10L25 14V34M25 14L33 6"/></svg>Allgemeine Axonometrie</div>
          <div class="n l2"><svg class="i" viewBox="0 0 36 36"><path d="M5 12H25V24H5ZM25 18L33 11V26L25 18M18 8Q24 2 29 8M3 32Q9 32 12 28"/></svg>00 Neue Animationsroute</div>
          <div class="n l1"><svg class="tw"><use href="#tc"/></svg><svg class="i" viewBox="0 0 36 36"><path stroke-width="2.500" d="M7 4H31V34H7ZM7 12H31M7 20H31M15 4V34M23 4V34M7 5H31"/></svg>Auswertungen</div>
        </div>
        <div class="vbar"><i></i></div>
      </div>
      <div class="hbar"><i></i></div>
      <div class="acts">
        <svg class="i blue" viewBox="0 0 36 36"><circle cx="18" cy="18" r="12.500"/><path d="M18 11V25M11 18H25"/></svg>
        <svg class="i blue" viewBox="0 0 36 36"><rect x="5" y="8" width="27" height="20" rx="1"/><path d="M5 9H32M10 15h2M15 15h13M10 22h2M15 22h13"/></svg>
        <svg class="i red" viewBox="0 0 36 36"><path d="M6 9Q18 16 30 31M31 5Q18 14 6 32"/></svg>
      </div>
      <div class="grp open gs">Beschreibungen</div>
      <div class="desc"><svg class="i w28" viewBox="0 0 28 24"><path d="M3 3H13V10H25Q27 10 27 12V20Q27 21 25 21H3Q2 21 2 20V4M6 6H10"/></svg><span>0.</span><span class="field">EG</span></div>
      <span class="btn einst">Einstellungen...</span>
      <div class="strip lower"><i></i></div>
      <div class="tr1"><span class="btn tb"><svg class="i"><use href="#trace"/></svg></span><span class="btn dim ref"><svg class="i gray"><use href="#storey"/></svg>0. EG<svg class="k"><use href="#cr"/></svg></span></div>
      <div class="tr2">
        <svg class="i" viewBox="0 0 36 36"><path class="g" d="M13 22H3Q1 22 1 20V4Q1 2 3 2H20Q22 2 22 4V9M8 9L28 25M8 16V9H16M28 18V25H20"/><path class="lb" d="M27 13H33Q35 13 35 15V32Q35 34 33 34H15Q13 34 13 32V27"/></svg>
        <svg class="i p2" viewBox="0 0 36 36"><path class="lb" d="M9 23H3Q1 23 1 21V5Q1 3 3 3H22Q24 3 24 5V11"/><path class="g" d="M24 13V34M14 24H34M21 16l3-3 3 3M21 31l3 3 3-3M17 21l-3 3 3 3M31 21l3 3-3 3"/></svg>
        <svg class="i" viewBox="0 0 36 36"><path class="lb" d="M15 27L10 29 1 12 20 4 27 16"/><path class="g" d="M18 30Q32 30 33 16M29 20l4-4 4 4M22 26l-4 4 4 4"/></svg>
        <svg class="i" viewBox="0 0 36 36"><path class="lb" d="M9 23H3Q1 23 1 21V5Q1 3 3 3H22Q24 3 24 5M27 9H33V29H12V25"/><path class="g" d="M30 24Q27 12 13 12M18 8l-5 4 5 4"/></svg>
        <svg class="i gray" viewBox="0 0 36 36"><circle cx="18" cy="18" r="15.500"/><path d="M9 18Q10 11 24 11M20 8l4 3-3 5M27 18Q26 25 12 25M16 28l-4-3 3-5"/></svg>
      </div>
      <div class="lab">Transparentpause:</div>
      <div class="slide"><span class="btn dim tb"><i class="redsq"></i><svg class="k"><use href="#cr"/></svg></span><div class="sl"><i class="track"></i><i class="thumb"></i><div class="ticks"><i></i><i></i><i></i><i></i><i></i><i></i><i></i><i></i><i></i><i></i><i></i></div></div><span class="btn dim w26 big"><svg class="k"><use href="#cr"/></svg></span></div>
      <div class="lab l2b">Aktiv:</div>
      <div class="slide"><span class="btn dim tb"><svg class="i rgb" viewBox="0 0 28 28"><path fill="#f19b8c" d="M14 14V2A12 12 0 0 1 24.400 20Z"/><path fill="#9dbdf8" d="M14 14L24.400 20A12 12 0 0 1 3.600 20Z"/><path fill="#9acb9e" d="M14 14L3.600 20A12 12 0 0 1 14 2Z"/></svg><svg class="k"><use href="#cr"/></svg></span><div class="sl"><i class="track"></i><i class="thumb"></i><div class="ticks"><i></i><i></i><i></i><i></i><i></i><i></i><i></i><i></i><i></i><i></i><i></i></div></div></div>
      <div class="tr3">
        <svg class="i" viewBox="0 0 36 36"><path class="lb" d="M11 21H3Q1 21 1 19V4Q1 2 3 2H21Q23 2 23 4V9"/><path class="g" d="M21 33Q18 27 14 23 17 19 21 25L19 14Q22 11 24 21V12Q27 9 28 20L30 13Q33 12 32 22L33 18Q37 17 34 26L32 33"/></svg>
        <svg class="i" viewBox="0 0 36 36"><path class="g" d="M9 22H4Q2 22 2 20V6Q2 4 4 4H21Q23 4 23 6V11M16 23H23V16"/><path class="lb" d="M14 13H33V31H12V13Z"/></svg>
        <svg class="i" viewBox="0 0 36 36"><path class="g" d="M14 7H3Q1 7 1 9V28Q1 30 3 30H14M18 3V34M13 15l-4 4 4 4M23 15l4 4-4 4"/><path class="lb" d="M22 7H34V30H22"/></svg>
        <svg class="i" viewBox="0 0 36 36"><path class="g" d="M10 25H4Q2 25 2 23V4H25V14M2 11L9 4M2 18L16 4M4 23L23 5M11 23L24 11M11 27Q22 18 34 27 22 36 11 27M9 34L34 17"/></svg>
      </div>
    </aside>
  </main>

  <footer class="foot"><svg class="i w34" viewBox="0 0 34 28"><path d="M3 18V2H27V5M8 9H33V26H8ZM8 11H33M2 3H27"/></svg><i class="fd"></i><span class="brand">GRAPHISOFT <em>ID</em></span></footer>
</div>

<div class="dialog">
  <div class="dtitle"><div class="lights"><i></i><i></i><i class="go"></i></div><span>Objekt-Grundeinstellungen ändern</span></div>
  <div class="dlabel">Verfügbare Parameter im Objekt:</div>
  <div class="dbody">
    <div class="params">
      <div class="p h">SCHRAFFUREN</div>
      <div class="p"><span>Schraffur 1</span><span>Misch-Schraffur 50 %</span><span></span><i class="sw hatch"></i></div>
      <div class="p h">LINIEN</div>
      <div class="p"><span>Linie 1</span><span>Volllinie</span><i class="line"></i></div>
      <div class="p h">STIFTE</div>
      <div class="p"><span>Stift 1</span><span>0.18 mm</span><span>90</span><i class="sw"><i class="ln green"></i><i class="bx green"></i></i></div>
      <div class="p"><span>Stift 2</span><span>0.18 mm</span><span>91</span><i class="sw"></i></div>
      <div class="p"><span>Stift 3</span><span>0.13 mm</span><span>1</span><i class="sw"><i class="ln thin"></i><i class="bx"></i></i></div>
      <div class="p"><span>Stift 4</span><span>0.18 mm</span><span>19</span><i class="sw"></i></div>
      <div class="p"><span>Stift 5</span><span>Transparent</span><span>0</span><i class="sw"><svg class="i nul" viewBox="0 0 20 20"><ellipse cx="10" cy="10" rx="7.500" ry="6.500"/><path d="M1 19L19 1"/></svg></i></div>
    </div>
    <div class="dtrack"></div>
  </div>
  <div class="dfoot"><span class="btn">Details ändern...</span><span class="btn ab">Abbrechen</span><span class="btn ok">OK</span></div>
</div>

<svg class="marks" viewBox="0 0 3108 2098">
  <defs>
    <filter id="chalk" filterUnits="userSpaceOnUse" x="1400" y="260" width="1660" height="940">
      <feTurbulence type="fractalNoise" baseFrequency="0.350" numOctaves="2" seed="4" result="n"/>
      <feDisplacementMap in="SourceGraphic" in2="n" scale="9" xChannelSelector="R" yChannelSelector="G"/>
    </filter>
  </defs>
  <g filter="url(#chalk)" fill="none" stroke-width="8">
    <g stroke="#ee4ffb"><rect x="1571" y="296" width="357" height="79"/><rect x="1433" y="887" width="931" height="48"/><path d="M1752 381V835"/><path fill="#ee4ffb" stroke-width="3" d="M1729 831H1776L1752.500 869Z"/></g>
    <g stroke="#1334fb"><rect x="2029" y="286" width="254" height="54"/><rect x="1434" y="1045" width="931" height="48"/><path d="M2304 307C2420 407 2649 540 2649 706C2649 860 2520 975 2400 1047"/><path fill="#1334fb" stroke-width="3" d="M2373 1066L2392 1028 2416 1067Z"/></g>
    <g stroke="#8a2a90"><rect x="2763" y="297" width="255" height="73"/><rect x="1434" y="1128" width="931" height="48"/><path d="M2880 391C2887 560 2881 720 2822 850C2751 1010 2600 1116 2390 1147"/><path fill="#8a2a90" stroke-width="3" d="M2366 1149L2396 1122 2399 1170Z"/></g>
  </g>
</svg>
</body>
</html>
```
FILE: styles.css
```css
*, *::before { box-sizing: border-box; }
html, body { margin: 0; }
body { position: relative; width: 3108px; height: 2098px; overflow: hidden; background: #fff; font: 22px/28px Inter, "Liberation Sans", sans-serif; color: #1f1f1f; white-space: nowrap; }
i, em, b { font-style: normal; font-weight: inherit; }
.sprite { position: absolute; width: 0; height: 0; }

/* icons */
.i { flex: none; display: block; width: 36px; height: 36px; fill: none; stroke: #26323a; stroke-width: 2.2; stroke-linejoin: round; overflow: visible; }
.i.gray, .g { stroke: #95999b; }
.i.blue, .b { stroke: #3f7df6; }
.i.red { stroke: #f0502f; stroke-width: 3.5; stroke-linecap: round; }
.o { stroke: #ee8433; }
.lb { stroke: #9ab5f2; }
.f { fill: #26323a; stroke: none; }
.bf { fill: #3f7df6; stroke: none; }
.num, .xy { fill: #26323a; stroke: none; font: 600 17px Inter, sans-serif; letter-spacing: 1px; }
.xy { font-size: 13px; letter-spacing: 0; }
.k { flex: none; display: block; width: 16px; height: 16px; fill: none; stroke: #1d1d1d; stroke-width: 3.2; }
.w48 { width: 48px; } .w44 { width: 44px; } .w40 { width: 40px; height: 30px; }
.w28 { width: 28px; height: 28px; } .w32 { width: 32px; height: 28px; } .w34 { width: 34px; height: 28px; }

/* window */
body::before { content: ""; position: absolute; left: 68px; top: 51px; width: 2972px; height: 1963px; border-radius: 22px; box-shadow: 0 0 0 1.5px #a9abab, 0 18px 48px rgba(0,0,0,.34), 0 0 30px rgba(0,0,0,.06); }
.window { position: absolute; left: 68px; top: 51px; width: 2972px; height: 1963px; border-radius: 22px; overflow: hidden; background: #e5e5e5; display: flex; flex-direction: column; gap: 2px; }
.titlebar { flex: none; height: 58px; margin-bottom: -2px; background: #e9ebec; border-bottom: 2px solid #c9cbcc; border-top: 2px solid #f6f7f7; display: flex; align-items: center; }
.lights { display: flex; gap: 16px; padding-left: 16px; width: 200px; }
.lights i { width: 24px; height: 24px; border-radius: 50%; background: #d0d1d2; border: 1.5px solid #bfc0c1; }
.doctitle { flex: 1; display: flex; justify-content: center; align-items: center; gap: 12px; padding-right: 200px; font-size: 26px; font-weight: 700; color: #a6a8a9; letter-spacing: .1px; }
.doc { width: 24px; height: 30px; }

.bar { flex: none; background: #e5e5e5; }
.barfill { height: 100%; background: #ebebeb; display: flex; align-items: center; padding: 0 0 4px 7px; }
.bar1 { height: 71px; } .bar1 .barfill { width: 2879px; }
.bar2 { height: 72px; } .bar2 .barfill { width: 356px; }
.grip { flex: none; width: 2px; height: 28px; margin-right: 11px; background: #b3b3b3; }
.t { flex: none; width: 60px; height: 52px; display: flex; align-items: center; justify-content: center; }
.c { flex: none; width: 30px; height: 52px; display: flex; align-items: center; justify-content: center; }
.t.on { width: 54px; margin: 0 3px; background: #c0c0c5; border-radius: 10px; }
.c.on { width: 24px; margin: 0 3px; background: #c0c0c5; border-radius: 8px; }
.t + .c { position: relative; left: -1px; }
.sep { flex: none; width: 23px; height: 44px; background: linear-gradient(#cfcfcf, #cfcfcf) center/2px 100% no-repeat; }
.s20 { width: 20px; }

/* info box */
.info { flex: none; height: 121px; background: #ebebeb; display: flex; }
.cell { flex: none; width: 370px; padding: 4px 0 0 8px; border-right: 2px solid #cfcfcf; font-size: 22px; }
.cell.first { width: 380px; padding-left: 7px; }
.cell.last { border-right: 2px solid #d8d8d8; }
.cell label { display: block; height: 24px; font-size: 18.4px; line-height: 24px; }
.cell.first label { padding-left: 11px; }
.row { height: 96px; display: flex; align-items: center; }
.first .grip { height: 46px; margin: -10px 11px 0 0; }
.haupt { height: 96px; padding-bottom: 19px; display: flex; flex-direction: column; justify-content: flex-end; }
.small { position: relative; z-index: 1; font-size: 18.4px; line-height: 24px; height: 24px; margin: 0 0 -17px -2px; }
.hb { display: flex; align-items: flex-end; gap: 4.500px; }
.btn { flex: none; height: 41px; border-radius: 11px; background: #fff; box-shadow: 0 1px 2px rgba(0,0,0,.3), 0 0 0 .5px rgba(0,0,0,.08); display: flex; align-items: center; justify-content: center; color: #1f1f1f; }
.btn.dim { background: #f5f5f5; box-shadow: 0 1px 2px rgba(0,0,0,.16); color: #a9a9a9; }
.dim .k { stroke: #9a9a9a; }
.btn.big { height: 56px; }
.w79 { width: 79px; gap: 19px; justify-content: flex-start; padding-left: 8px; }
.w79 .i + .k { margin-right: -10px; }
.w79.down { background: #c0c0c5; height: 39px; margin-bottom: 2px; padding: 4px 0 0 0; box-shadow: none; justify-content: center; }
.w67 { width: 67px; } .w67 svg { height: 32px; }
.w26 { width: 26px; margin-left: -1px; }
.w83 { width: 83px; } .w83 svg { height: 34px; }
.pop { width: 349px; margin-left: 2px; justify-content: flex-start; padding-left: 12px; }
.pop .k { margin: 0 2px 0 auto; }
.eye { width: 34px; height: 24px; margin-right: 4px; }
.kat { width: 353px; } .kat .i { margin-right: 8px; } .kat .k { margin-right: -2px; }
.nam { width: 353px; padding-left: 14px; } .nam .k { margin-right: 3px; }
.swatch { width: 42px; height: 42px; margin-right: 9px; border: 2px solid #000; background: repeating-conic-gradient(#8fd09c 0 25%, #b3e0bb 0 50%) 0 0/4px 4px; }
.geo { padding-left: 2px; }
.g1 { width: 84px; height: 54px; display: flex; align-items: center; justify-content: center; border-radius: 11px; }
.g1.sel { background: #c0c0c5; margin: 0 3px; }
.stift { flex-direction: column; align-items: flex-end; justify-content: center; gap: 8px; padding-right: 20px; }
.pr { height: 34px; display: flex; align-items: center; }
.penic { width: 24px; height: 30px; margin: 0 16px 0 7px; }
.field { height: 34px; background: #fff; border: 1px solid #dadada; border-bottom: 2px solid #b4b4b4; padding: 0 7px; line-height: 31px; }
.pr .field { width: 85px; margin-right: 14px; font-size: 22px; }
.field.dim { background: #f3f3f3; color: #a9a9a9; border-bottom-color: #d0d0d0; }
.pb { width: 64px; height: 34px; gap: 14px; border-radius: 9px; }
.pb .ln { width: 4px; height: 16px; background: #000; } .pb .bx { width: 31px; height: 16px; background: #000; }
.ks .pb .ln { width: 2px; }
i.green, .pb i.green { background: #50b06b; }
.nul { width: 20px; height: 20px; }
.pb .nul { margin-left: 20px; }
.ks { padding-right: 20px; }
.kl { gap: 4px; padding-left: 2px; }
.volll { width: 260px; justify-content: flex-start; padding-left: 36px; }
.vl { width: 184px; font-size: 16.8px; line-height: 20px; color: #8c8c8c; padding-bottom: 5px; }
.vl i { display: block; height: 2px; margin-top: 10px; background: #8c8c8c; }
.volll .k { margin-left: 20px; }

/* body */
.main { flex: none; height: 1585px; display: flex; gap: 3px; }
.tools { width: 311px; background: #ebebeb; display: flex; flex-direction: column; font-size: 22px; }
.strip { flex: none; height: 14px; display: flex; justify-content: center; align-items: center; padding-top: 4px; }
.strip i { width: 118px; height: 2.500px; background: #a9a9a9; }
.toollist { background: #edeff1; padding: 2px 0 3px; }
.tool { height: 56px; display: flex; align-items: center; padding-left: 17px; color: #000; }
.tool .i { width: 60px; height: 44px; margin-right: 15px; }
.tool .i.w path, .tool .i.w ellipse { fill: #fafafa; }
.tool .i.w .g { fill: #f4f4f4; }
.tool.cur { height: 49px; margin: 0 1px 0 4px; padding-left: 13px; background: #c0c0c5; border-radius: 10px; }
.tool.mark { height: 62px; }
.grp { flex: none; height: 40px; margin-bottom: 2px; background: #d5d5d5; border-radius: 6px; display: flex; align-items: center; color: #262626; }
.grp::before { content: ""; width: 14px; height: 18px; margin: 0 17px 0 13px; border: solid transparent; border-width: 9px 0 9px 14px; border-left-color: #93979a; }
.grp.open { margin-bottom: 1px; }
.grp.open::before { width: 18px; height: 13px; margin: 0 15px 0 11px; border-width: 13px 9px 0; border-color: #93979a transparent transparent; }

.view { width: 2033px; display: flex; flex-direction: column; }
.tabs { flex: none; height: 42px; background: #e2e2e2; display: flex; }
.quad { width: 66px; background: #e5e5e5; display: flex; align-items: center; justify-content: center; }
.quad .i { width: 40px; height: 30px; }
.tab { width: 600px; background: #fff; display: flex; align-items: center; justify-content: center; gap: 6px; padding-right: 2px; color: #3a3a3a; padding-top: 2px; letter-spacing: .2px; }
.nav { width: 99px; margin-left: auto; background: #fafafa; display: flex; align-items: center; justify-content: flex-end; padding-right: 5px; gap: 12px; }
.nav .i { height: 32px; }
.canvas { flex: 1; position: relative; background: linear-gradient(90deg, #d8d8d8 2px, transparent 2px) 57px 0/230px 100%, linear-gradient(#d8d8d8 2px, transparent 2px) 0 129px/100% 230px, #fff; }
.drawing { position: absolute; left: 500px; top: 569px; width: 270px; height: 504px; }
.status { flex: none; height: 36px; background: #ebebeb; display: flex; }
.sc { flex: none; width: 172px; border-right: 2px solid #cfcfcf; display: flex; align-items: center; padding: 4px 4px 0 10px; }
.sc b { flex: 1; padding-left: 11px; font-size: 21.5px; letter-spacing: -.2px; }
.sc.a { width: 174px; } .sc.a b { text-align: center; padding-left: 2px; }
.sc.a:nth-child(7) { width: 172px; }
.sc .i { height: 32px; }
.zoomers { width: 143px; padding: 2px 0 0 4px; gap: 10px; }
.sc.end { flex: 1; border-right: 0; padding-right: 0; }
.sc.end .k { margin-right: -2px; }

/* navigator */
.side { width: 622px; background: #ebebeb; display: flex; flex-direction: column; }
.side .strip i { width: 140px; }
.stabs { flex: none; height: 70px; display: flex; align-items: center; padding: 0 6px; }
.st { width: 56px; height: 54px; border-radius: 11px; display: flex; align-items: center; justify-content: center; }
.st.on { background: #c0c0c5; }
.vs { width: 2px; height: 44px; background: #d4d4d4; margin: 0 10px 0 14px; }
.st2 { width: 60px; display: flex; justify-content: center; }
.menu { width: 66px; margin: -6px 0 0 auto; gap: 8px; justify-content: flex-end; }
.menu .i { height: 24px; }
.search { flex: none; height: 42px; margin: 5px 6px 6px; background: #fff; border: 1px solid #e0e0e0; border-bottom: 2px solid #b8b8b8; display: flex; align-items: center; gap: 13px; padding-left: 12px; color: #bcbcbc; letter-spacing: .1px; }
.search .i { width: 28px; height: 28px; }
.treebox { flex: none; height: 749px; display: flex; background: #fafafa; overflow: hidden; border-bottom: 2px solid #e4e4e4; }
.tree { width: 593px; background: #fff; border-right: 1px solid #e2e2e2; color: #000; }
.n { height: 48px; display: flex; align-items: center; }
.n .i { margin-right: 8.5px; }
.i.e { fill: #ebebeb; } .n .i.w { fill: #f4f4f4; }
.l0 { padding-left: 6px; letter-spacing: .27px; } .l1 { padding-left: 34px; } .l1.x { padding-left: 66px; } .l2 { padding-left: 94px; }
.hit { background: #dcdcdc; font-weight: 700; }
.tw { width: 20px; height: 20px; margin-right: 12px; fill: none; stroke: #7c7c7c; stroke-width: 2.8; }
.l0 .tw { margin-right: 11px; }
.vbar { width: 28px; padding: 6px 4px 0 8px; }
.vbar i { display: block; width: 16px; height: 153px; border-radius: 8px; background: #c1c1c1; }
.hbar { flex: none; height: 27px; background: #fafafa; padding: 7px 6px 0; }
.hbar i { display: block; width: 467px; height: 16px; border-radius: 8px; background: #c1c1c1; }
.acts { flex: none; height: 70px; display: flex; align-items: center; gap: 24px; padding: 5px 0 0 16px; }
.grp.gs { height: 44px; margin: 0 4px; }
.grp.gs::before { margin: 0 15px 0 11px; }
.desc { flex: none; height: 52px; display: flex; align-items: center; padding: 4px 6px 0 6px; }
.desc span { padding-left: 10px; }
.desc .i { height: 24px; }
.desc .field { width: 425px; margin-left: auto; padding-left: 6px; }
.einst { height: 42px; margin: 0 6px; }
.strip.lower { height: 20px; margin-top: 6px; border-top: 2px solid #e3e3e3; padding-top: 0; }
.tr1 { flex: none; display: flex; gap: 4px; padding: 0 6px; height: 56px; margin-top: 1px; }
.tb { width: 56px; height: 56px; }
.ref { width: 550px; height: 56px; justify-content: flex-start; padding-left: 6px; gap: 2px; }
.ref .k { margin: 0 -1px 0 auto; }
.tr2 { flex: none; height: 78px; border-bottom: 2px solid #d3d3d3; display: flex; align-items: center; gap: 24px; padding-left: 15px; }
.p2 { margin-left: 61px; }
.lab { flex: none; height: 54px; padding: 14px 5px 0; color: #7d7d7d; }
.l2b { height: 50px; padding-top: 10px; }
.slide { flex: none; height: 56px; display: flex; padding: 0 6px; }
.slide .k { margin-right: -2px; }
.slide .tb { gap: 7px; padding-left: 8px; }
.slide .big .k { margin: 0; }
.redsq { width: 24px; height: 24px; background: #f19b8c; }
.slide .rgb { width: 26px; height: 28px; stroke: #808486; }
.slide .rgb + .k { margin-left: -2px; }
.sl { width: 516px; margin: 0 6px 0 8px; padding-top: 12px; display: grid; grid-template: 32px 12px / 1fr; }
.track { grid-area: 1/1; align-self: center; height: 7px; border-radius: 4px; background: #e1e1e1; }
.thumb { grid-area: 1/1; justify-self: end; width: 16px; height: 32px; border-radius: 8px; background: #f6f6f6; box-shadow: 0 1px 2px rgba(0,0,0,.3); z-index: 1; }
.ticks { display: flex; justify-content: space-between; padding: 0 2px 0 1px; margin-top: -4px; }
.ticks i { width: 2px; height: 6px; background: #b6b6b6; }
.slide .w26 { margin-left: 0; }
.tr3 { flex: 1; margin-top: 12px; border-top: 2px solid #d3d3d3; display: flex; align-items: center; gap: 24px; padding: 10px 0 0 76px; }

.foot { flex: none; height: 48px; background: #ebebeb; display: flex; align-items: center; justify-content: flex-end; padding: 0 24px 8px 0; }
.fd { width: 2px; height: 30px; background: #9a9da0; margin: 0 22px 0 19px; }
.brand { font: 700 27px/30px Lato, sans-serif; color: #26323a; letter-spacing: -.35px; }
.brand em { font-weight: 300; }

/* settings dialog */
.dialog { position: absolute; left: 1317px; top: 744px; width: 1098px; height: 796px; border-radius: 20px; background: #ebebeb; box-shadow: 0 0 0 1.5px rgba(0,0,0,.22), 0 26px 60px rgba(0,0,0,.36), 0 0 30px rgba(0,0,0,.12); display: flex; flex-direction: column; overflow: hidden; }
.dtitle { flex: none; height: 57px; background: #f1f5f8; border-bottom: 2px solid #cbcdcf; display: flex; align-items: center; font-size: 26px; font-weight: 700; color: #474747; }
.dtitle .lights i { background: #d8dcdf; border-color: #c6cacd; } .dtitle .lights i.go { background: #5cc050; border-color: #50ae46; }
.dtitle span { flex: 1; text-align: center; padding-right: 200px; }
.dlabel { flex: none; height: 49px; padding: 7px 10px 0; line-height: 28px; letter-spacing: .1px; }
.dbody { flex: none; height: 624px; display: flex; background: #fafafa; }
.params { width: 1068px; background: #fff; border-right: 1px solid #e0e0e0; color: #000; }
.p { height: 40px; border-bottom: 2px solid #e2e2e2; display: grid; grid-template-columns: 350px 354px 104px 92px; padding-left: 124px; align-items: center; }
.p span { padding-bottom: 2px; }
.p:first-child { height: 41px; }
.p .line { grid-column: 3/5; height: 2px; background: #000; margin-left: 3px; }
.p.h { display: flex; background: #f0f0f0; padding-left: 12px; font: 700 22px/28px "Liberation Sans", Arial, sans-serif; border-color: #dedede; }
.p.h::before { content: ""; width: 18px; height: 13px; border: solid transparent; border-width: 13px 9px 0; border-top-color: #93979a; margin-right: 89px; }
.sw { width: 92px; height: 32px; border: 2px solid #000; background: #fff; display: flex; align-items: center; justify-content: center; }
.sw .ln { width: 3px; height: 20px; background: #000; margin: 0 12px 0 10px; } .sw .bx { width: 57px; height: 20px; background: #000; }
.sw .thin { width: 2px; margin-right: 13px; }
.sw i.green { background: #4aa45a; }
.hatch { background: repeating-conic-gradient(#333 0 25%, #ddd 0 50%) 0 0/4px 4px; }
.dfoot { flex: 1; display: flex; align-items: center; padding: 0 12px 0; }
.dfoot .btn { width: 296px; height: 42px; }
.dfoot .ab { width: 176px; margin-left: auto; margin-right: 24px; }
.dfoot .ok { width: 176px; background: #3a82f7; color: #fff; font-weight: 500; }

.marks { position: absolute; left: 0; top: 0; width: 3108px; height: 2098px; pointer-events: none; }
```
